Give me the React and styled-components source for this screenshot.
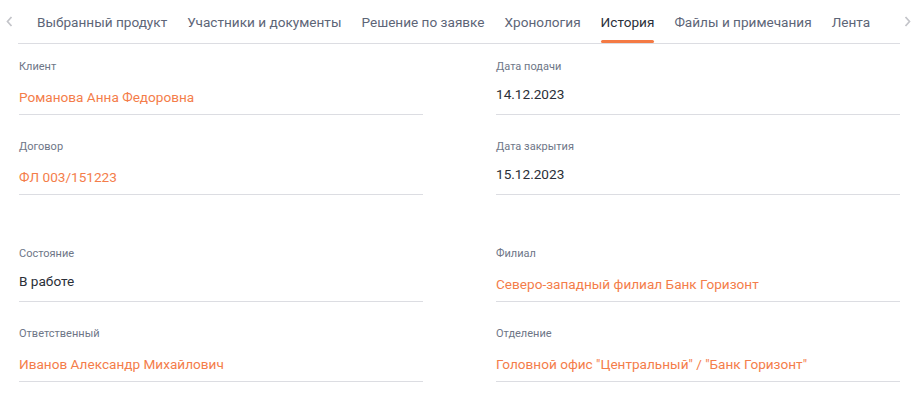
import React from "react";
import styled, { createGlobalStyle } from "styled-components";

const tabs = [
  "Выбранный продукт",
  "Участники и документы",
  "Решение по заявке",
  "Хронология",
  "История",
  "Файлы и примечания",
  "Лента",
];

const groups = [
  [
    { label: "Клиент", value: "Романова Анна Федоровна", link: true },
    { label: "Дата подачи", value: "14.12.2023" },
    { label: "Договор", value: "ФЛ 003/151223", link: true },
    { label: "Дата закрытия", value: "15.12.2023" },
  ],
  [
    { label: "Состояние", value: "В работе" },
    { label: "Филиал", value: "Северо-западный филиал Банк Горизонт", link: true },
    { label: "Ответственный", value: "Иванов Александр Михайлович", link: true },
    { label: "Отделение", value: 'Головной офис "Центральный" / "Банк Горизонт"', link: true },
  ],
];

const App = () => {
  return (
    <>
      <GlobalStyle />
      <Page>
        <TabBar>
          <Arrow side="left">
            <svg width="7" height="11" viewBox="0 0 7 11">
              <path d="M5.5 1L1.5 5.5L5.5 10" fill="none" stroke="#c3c4c9" strokeWidth="1.7" />
            </svg>
          </Arrow>
          <TabList>
            {tabs.map((t) => (
              <Tab key={t} active={t === "История"}>
                {t}
              </Tab>
            ))}
          </TabList>
          <Arrow side="right">
            <svg width="7" height="11" viewBox="0 0 7 11">
              <path d="M1.5 1L5.5 5.5L1.5 10" fill="none" stroke="#c3c4c9" strokeWidth="1.7" />
            </svg>
          </Arrow>
        </TabBar>

        {groups.map((g, i) => (
          <Grid key={i}>
            {g.map((f) => (
              <Field key={f.label}>
                <Label>{f.label}</Label>
                <Value link={f.link}>{f.value}</Value>
              </Field>
            ))}
          </Grid>
        ))}
      </Page>
    </>
  );
};
export default App;

// css
const GlobalStyle = createGlobalStyle`
  body {
    margin: 0;
    background: #fff;
    font-family: Roboto, "Noto Sans", sans-serif;
  }
`;
const Page = styled.div`
  width: 919px;
`;
const TabBar = styled.div`
  display: flex;
  align-items: stretch;
  height: 44px;
`;
const Arrow = styled.div`
  width: ${({ side }) => (side === "left" ? "18px" : "19px")};
  height: 42px;
  display: flex;
  align-items: center;
  justify-content: flex-start;
  padding-left: ${({ side }) => (side === "left" ? "6px" : "4px")};
  box-sizing: border-box;
  flex-shrink: 0;
`;
const TabList = styled.div`
  flex: 1;
  display: flex;
  padding-left: 9px;
  border-bottom: 1px solid #dcdde2;
`;
const Tab = styled.div`
  position: relative;
  padding: 0 10px;
  height: 43px;
  display: flex;
  align-items: center;
  font-size: 13.6px;
  white-space: nowrap;
  color: ${({ active }) => (active ? "#2a2f3a" : "#5d6577")};
  &::after {
    content: "";
    display: ${({ active }) => (active ? "block" : "none")};
    position: absolute;
    left: 10px;
    right: 10px;
    bottom: 0;
    height: 3px;
    border-radius: 2px;
    background: #f47a44;
  }
`;
const Grid = styled.div`
  display: grid;
  grid-template-columns: 404px 404px;
  column-gap: 73px;
  row-gap: 24px;
  padding: 15px 0 36px 19px;
`;
const Field = styled.div`
  display: flex;
  flex-direction: column;
  border-bottom: 1px solid #dcdde2;
`;
const Label = styled.div`
  font-size: 11px;
  line-height: 16px;
  color: #6e7687;
`;
const Value = styled.div`
  margin-top: 9px;
  font-size: 13.6px;
  line-height: 20px;
  padding-top: ${({ link }) => (link ? "3px" : "0")};
  padding-bottom: ${({ link }) => (link ? "7px" : "10px")};
  color: ${({ link }) => (link ? "#f47d4a" : "#2b2f38")};
`;
